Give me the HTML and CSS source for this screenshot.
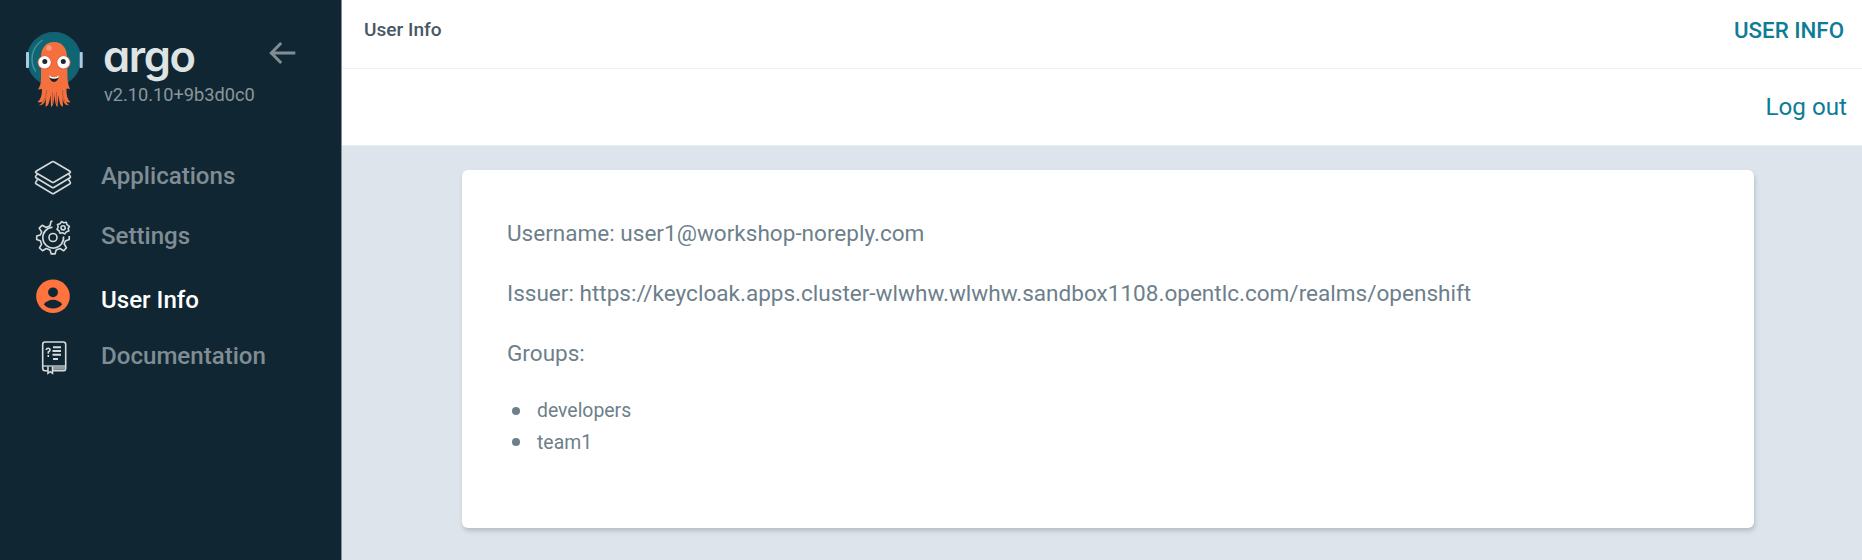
FILE: index.html
```html
<!DOCTYPE html>
<html lang="en">
<head>
<meta charset="utf-8">
<title>User Info</title>
<link rel="stylesheet" href="styles.css">
</head>
<body>
<div class="layout">
  <aside class="sidebar">
    <div class="brand">
      <svg class="mascot" viewBox="0 0 60 78" width="60" height="78">
        <circle cx="29" cy="28" r="27" fill="#0d6672"/>
        <circle cx="29" cy="28" r="26.3" fill="none" stroke="#1c5a75" stroke-width="1.6"/>
        <path d="M10.500 40 C4.500 31 6 17 17 9.500" fill="none" stroke="#45909a" stroke-width="1.500" stroke-linecap="round"/>
        <rect x="1" y="21" width="3" height="16" rx="0.800" fill="#a9cbe3"/>
        <rect x="54.700" y="21" width="3" height="16" rx="0.800" fill="#a9cbe3"/>
        <path d="M16 26 C16 17 21 11 29 11 C37 11 42 17 42 26 L42.500 48 Q43 54 45 58 L41.500 57.500 Q41 68 45.500 71 Q43 72 41 70.500 Q42 73 44 74 Q39 75.500 37.500 67 L38 75.500 Q34.500 76 33.500 64 L32.500 76 Q30 75 29.500 63 Q29 75 26 76 L25.500 64 Q24 76 20.500 75.500 L21 67 Q19 75.500 14 74 Q17 73 17.500 70.500 Q15 72 12.500 71 Q17 68 17 58 L13 58.500 Q16 54 16 48 Z" fill="#f4713f"/>
        <path d="M21.500 59 Q22 66 18 71 M27.500 61 V73 M31.500 61 V73 M37.500 59 Q37 66 40 71" fill="none" stroke="#a94d31" stroke-width="0.700"/>
        <circle cx="24" cy="17" r="2.700" fill="#f79b7c"/>
        <circle cx="19.600" cy="31.500" r="7.100" fill="#ee5a39"/>
        <circle cx="38.500" cy="31.500" r="7.100" fill="#ee5a39"/>
        <circle cx="19.600" cy="31.300" r="6.200" fill="#fff"/>
        <circle cx="38.500" cy="31.300" r="6.200" fill="#fff"/>
        <circle cx="19.800" cy="30.400" r="2.500" fill="#20242d"/>
        <circle cx="38.300" cy="30.400" r="2.500" fill="#20242d"/>
        <path d="M24 44.500 Q29 48 34 44.500 Q33 51 29 51 Q25 51 24 44.500Z" fill="#231f20"/>
        <path d="M24 44.300 Q29 48 34 44.300 L33.500 46.500 Q29 49 24.500 46.500Z" fill="#fff"/>
      </svg>
      <div class="brand-text">
        <span class="wordmark">argo</span>
        <span class="version">v2.10.10+9b3d0c0</span>
      </div>
      <svg class="collapse" viewBox="0 0 28 24" width="28" height="24">
        <path d="M26.300 12 H2.500 M12.200 2 L2.300 12 L12.200 22" fill="none" stroke="#818d94" stroke-width="3"/>
      </svg>
    </div>
    <nav class="menu">
      <a class="item">
        <svg viewBox="0 0 40 40" width="40" height="40" fill="none" stroke="#d5dadc" stroke-width="1.600" stroke-linejoin="round">
          <path d="M20.800 4.700 L37 14.300 Q38 15 37 15.700 L20.800 25.200 Q20 25.700 19.200 25.200 L3 15.700 Q2 15 3 14.300 L19.200 4.700 Q20 4.200 20.800 4.700Z"/>
          <path d="M4.500 17 L3 18.700 Q2 20 3 20.800 L19.200 30.500 Q20 31 20.800 30.500 L37 20.800 Q38 20 37 18.700 L35.500 17"/>
          <path d="M4.500 22.500 L3 24.700 Q2 26 3 26.800 L19.200 36.500 Q20 37 20.800 36.500 L37 26.800 Q38 26 37 24.700 L35.500 22.500"/>
        </svg>
        <span>Applications</span>
      </a>
      <a class="item">
        <svg viewBox="0 0 40 40" width="40" height="40" fill="none" stroke="#d5dadc" stroke-width="1.600" stroke-linejoin="round">
          <path d="M19.500 4 L18 4.500 L17 8.800 L13.200 10.500 L9.200 8.300 L6.200 11.100 L8.700 15 L7.300 18 L3.700 19 V22.500 L7.300 23.700 L8.600 27.200 L6.500 31 L9.500 33.700 L13.300 31.500 L17 33 L18.300 36.900 H22 L23.200 33 L27 31.500 L30.700 33.700 L33.500 30.800 L31.200 27 L32.300 24 L36.200 22.500 V19"/>
          <path d="M19.500 10.300 A10.400 10.400 0 1 0 30.500 19.500"/>
          <circle cx="20" cy="20.500" r="4"/>
          <path d="M28.700 4.600 L30.800 5.800 L33.300 5.300 L34 7.700 L36.400 9.300 L35.200 11.500 L35.900 14 L33.500 14.800 L31.700 16.900 L29.500 15.800 L27 16.300 L26.200 14 L24 12.300 L25.200 10 L24.500 7.500 L27 6.800Z"/>
          <circle cx="30.100" cy="10.800" r="2.100"/>
        </svg>
        <span>Settings</span>
      </a>
      <a class="item item-active">
        <svg viewBox="0 0 40 40" width="40" height="40">
          <circle cx="20" cy="19.300" r="16.800" fill="#ff733f"/>
          <circle cx="20" cy="15.300" r="4.900" fill="#102733"/>
          <path d="M10.800 27.300 Q14.500 22.800 20 22.800 Q25.500 22.800 29.200 27.300 Q25.500 31.600 20 31.600 Q14.500 31.600 10.800 27.300Z" fill="#102733"/>
        </svg>
        <span>User Info</span>
      </a>
      <a class="item">
        <svg viewBox="0 0 40 40" width="40" height="40" fill="none" stroke="#d5dadc" stroke-width="1.600">
          <path d="M15 33.800 H12 Q9.700 33.800 9.700 31 V7.500 Q9.700 5 12 5 H30.200 Q32.700 5 32.700 7.500 V31 Q32.700 33.800 31 33.800 H19.500"/>
          <path d="M19.500 31.300 H32" stroke="#929da3" stroke-width="3"/>
          <path d="M10 29 H32.500" stroke-width="1.300"/>
          <path d="M15 29.500 V36.300 L17.200 34.700 L19.500 36.300 V29.500"/>
          <path d="M20 10.300 H28 M19.500 14 H28 M19.500 17.800 H28 M20 22 H25" stroke-width="1.900"/>
          <path d="M13.300 13 Q13.300 11.200 15.200 11.200 Q17 11.200 17 13 Q17 14 15.300 15 V16.700 M15.300 18 V19.900"/>
        </svg>
        <span>Documentation</span>
      </a>
    </nav>
  </aside>
  <main class="main">
    <header class="topbar">
      <span class="crumb">User Info</span>
      <span class="title">USER INFO</span>
    </header>
    <div class="toolbar"><a class="logout">Log out</a></div>
    <section class="content">
      <div class="card">
        <p>Username: user1@workshop-noreply.com</p>
        <p>Issuer: https://keycloak.apps.cluster-wlwhw.wlwhw.sandbox1108.opentlc.com/realms/openshift</p>
        <p>Groups:</p>
        <ul class="groups">
          <li>developers</li>
          <li>team1</li>
        </ul>
      </div>
    </section>
  </main>
</div>
</body>
</html>
```
FILE: styles.css
```css
* { box-sizing: border-box; }
body {
  margin: 0;
  font-family: Roboto, "Liberation Sans", sans-serif;
  color: #6d7f8b;
}
.layout { display: flex; height: 560px; overflow: hidden; }
.sidebar {
  width: 342px;
  flex: none;
  background: #102733;
  border-right: 1px solid #7f8e97;
}
.brand {
  display: flex;
  align-items: flex-start;
  height: 147px;
  padding: 31px 0 0 25px;
}
.mascot { flex: none; }
.brand-text { display: flex; flex-direction: column; width: 184px; padding-left: 18px; }
.wordmark {
  font: 600 43.500px/50px Inter, sans-serif;
  font-feature-settings: "cv11";
  letter-spacing: -1.400px;
  color: #dee3e3;
}
.version { padding-left: 1px; font-size: 18.200px; font-weight: 400; line-height: 27px; color: #8b969c; }
.collapse { margin-top: 10px; }
.menu { display: flex; flex-direction: column; }
.item {
  display: flex;
  align-items: center;
  height: 60px;
  padding-left: 33px;
  gap: 28px;
  font-size: 24.100px;
  font-weight: 500;
  line-height: 40px;
  color: #818d94;
}
.item span { padding-bottom: 2px; }
.item svg { flex: none; }
.item-active { color: #fff; }
.item-active span { padding: 5px 0 0; }
.main { flex: 1; display: flex; flex-direction: column; min-width: 0; }
.topbar {
  display: flex;
  justify-content: space-between;
  height: 69px;
  padding: 0 18px 0 22px;
  border-bottom: 1px solid #edf1f5;
  background: #fff;
  line-height: 60px;
  font-weight: 500;
}
.crumb { font-size: 19.100px; color: #495763; }
.title { font-size: 22.300px; color: #0d7c97; }
.toolbar {
  display: flex;
  justify-content: flex-end;
  height: 77px;
  padding-right: 15px;
  border-bottom: 1px solid #e9eef2;
  background: #fff;
}
.logout { font-size: 24.200px; line-height: 76px; color: #0d7c97; }
.content { flex: 1; padding: 24px 108px 0 120px; background: #dee4eb; }
.card {
  height: 358px;
  padding: 34px 45px;
  background: #fff;
  border-radius: 6px;
  box-shadow: 1px 3px 4px rgba(90, 105, 115, .3);
}
.card p { margin: 0; font-size: 22.560px; line-height: 60px; }
.groups { margin: 11px 0 0; padding: 0; list-style: none; font-size: 19.400px; line-height: 31.500px; }
.groups li { display: flex; align-items: center; }
.groups li::before {
  content: "";
  width: 8px;
  height: 8px;
  margin: 0 17px 0 5px;
  border-radius: 50%;
  background: #6d7f8b;
}
```
